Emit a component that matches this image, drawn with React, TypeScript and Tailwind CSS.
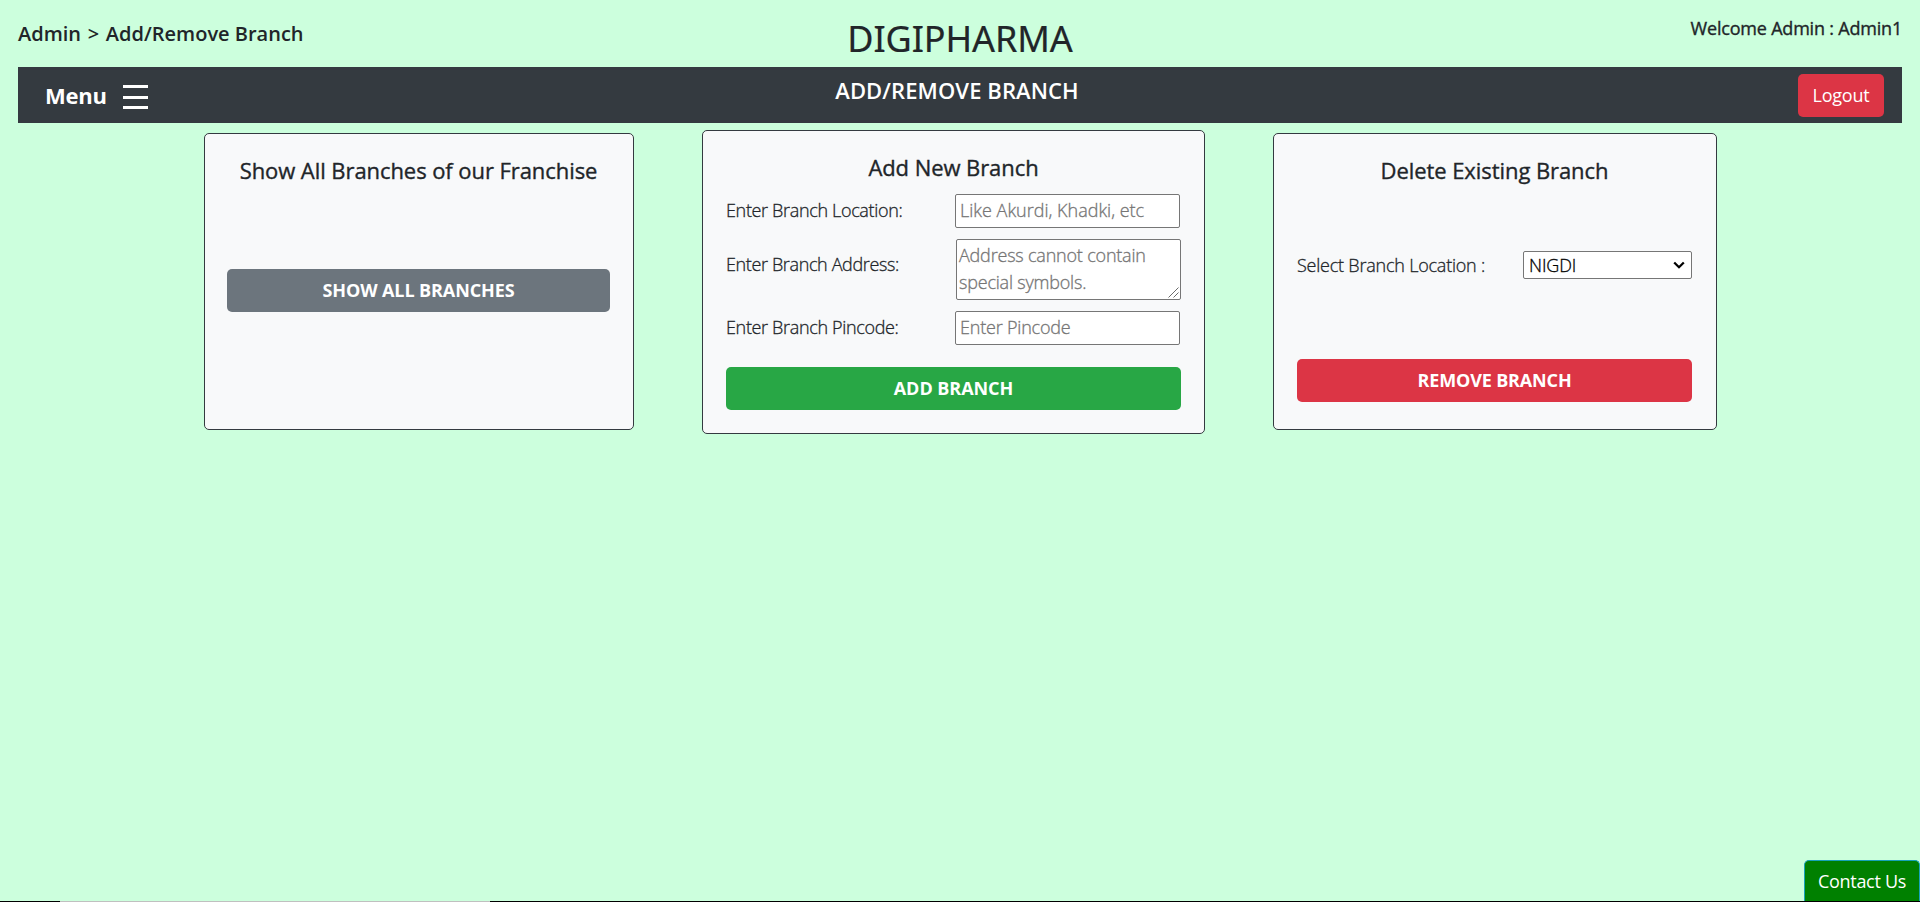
import type { ReactNode } from "react";

const medium = "[-webkit-text-stroke:0.35px_currentColor]";
const thin = "font-light [-webkit-text-stroke:0.3px_currentColor]";

function CardTitle({ children }: { children: ReactNode }) {
  return <h2 className={`text-center text-[22px] leading-[27px] tracking-[-0.07px] ${medium}`}>{children}</h2>;
}

function Row({ label, tracking, children }: { label: string; tracking: string; children: ReactNode }) {
  return (
    <div className="flex items-center justify-between">
      <label className={`text-lg leading-[27px] ${thin} ${tracking}`}>{label}</label>
      {children}
    </div>
  );
}

const field =
  "rounded-[2px] border border-[#767676] bg-white text-lg leading-[27px] font-light placeholder:text-[#757575] placeholder:opacity-100 [-webkit-text-stroke:0.3px_#757575]";
const button = "block h-[43px] w-full rounded-[5px] pb-px text-lg leading-[27px] font-bold text-white";

export default function App() {
  return (
    <div className="relative flex h-[902px] w-full flex-col overflow-hidden bg-[#ccffdd] font-['Open_Sans',sans-serif] text-[#212529]">
      <header className="grid h-[67px] shrink-0 grid-cols-3 items-start px-[18px]">
        <div className="pt-5 text-xl leading-7 font-semibold">
          Admin <span className="mx-[1.5px]">&gt;</span> Add/Remove Branch
        </div>
        <h1 className="pt-4 text-center font-['Noto_Sans',sans-serif] text-4xl leading-[45px] tracking-[-0.1px] [-webkit-text-stroke:0.2px_currentColor]">
          DIGIPHARMA
        </h1>
        <div className={`pt-4 text-right text-lg leading-6 tracking-[-0.2px] ${medium}`}>Welcome Admin : Admin1</div>
      </header>

      <nav className="mx-[18px] grid h-14 shrink-0 grid-cols-3 bg-[#343a40] text-white">
        <div className="flex items-center gap-4 pl-[27px]">
          <span className="text-[22px] leading-7 font-bold tracking-[-0.2px]">Menu</span>
          <span className="mt-1 flex w-[25px] flex-col gap-[7.5px]">
            <i className="h-[3px] bg-white" />
            <i className="h-[3px] bg-white" />
            <i className="h-[3px] bg-white" />
          </span>
        </div>
        <div className="pt-[10px] pr-[6px] text-center text-[22px] leading-[26px] font-semibold tracking-[0.1px]">
          ADD/REMOVE BRANCH
        </div>
        <div className="flex justify-end pt-[7px] pr-[18px]">
          <button className="h-[43px] w-[86px] rounded-[5px] bg-[#dc3545] text-lg leading-[27px] tracking-[-0.2px]">Logout</button>
        </div>
      </nav>

      <main className="flex items-start pt-[7px] pl-[204px]">
        <section className="mt-[3px] h-[297px] w-[430px] rounded-[5px] border border-[#343a40] bg-[#f8f9fa] pt-[23px] pr-[23px] pl-[22px]">
          <CardTitle>Show All Branches of our Franchise</CardTitle>
          <button className={`mt-[85px] bg-[#6c757d] tracking-[-0.1px] ${button}`}>SHOW ALL BRANCHES</button>
        </section>

        <section className="ml-[68px] h-[304px] w-[503px] rounded-[5px] border border-[#343a40] bg-[#f8f9fa] px-[23px] pt-[23px]">
          <CardTitle>Add New Branch</CardTitle>
          <div className="mt-[13px] mr-px">
            <Row label="Enter Branch Location:" tracking="pb-px tracking-[-0.34px]">
              <input className={`h-[34px] w-[225px] px-1 pb-0.5 ${field}`} placeholder="Like Akurdi, Khadki, etc" />
            </Row>
          </div>
          <div className="mt-[11px] flex items-start justify-between">
            <label className={`pt-3 text-lg leading-[27px] tracking-[-0.37px] ${thin}`}>Enter Branch Address:</label>
            <div className="relative">
              <textarea
                className={`block h-[61px] w-[225px] resize-none overflow-hidden px-[2px] pt-[2px] tracking-[-0.2px] ${field}`}
                placeholder="Address cannot contain special symbols."
              />
              <svg
                className="absolute right-[2px] bottom-[2px] size-[11px]"
                viewBox="0 0 11 11"
                stroke="#444444"
                strokeWidth="0.8"
              >
                <path d="M0.5 10.5 10.5 0.5M5.5 10.5 10.5 5.5" />
              </svg>
            </div>
          </div>
          <div className="mt-[11px] mr-px">
            <Row label="Enter Branch Pincode:" tracking="pb-px tracking-[-0.34px]">
              <input className={`h-[34px] w-[225px] px-1 pb-0.5 tracking-[-0.2px] ${field}`} placeholder="Enter Pincode" />
            </Row>
          </div>
          <button className={`mt-[22px] bg-[#28a745] tracking-[-0.05px] ${button}`}>ADD BRANCH</button>
        </section>

        <section className="mt-[3px] ml-[68px] h-[297px] w-[444px] rounded-[5px] border border-[#343a40] bg-[#f8f9fa] pt-[23px] pr-[24px] pl-[23px]">
          <CardTitle>Delete Existing Branch</CardTitle>
          <div className="mt-[67px]">
            <Row label="Select Branch Location :" tracking="tracking-[-0.22px]">
              <div className="flex h-[28px] w-[169px] items-center justify-between rounded-[2px] border border-[#767676] bg-white pr-[6px] pl-[5px] text-lg leading-[26px] text-black">
                <span className={`tracking-[-0.1px] ${thin}`}>NIGDI</span>
                <svg className="h-2 w-3" viewBox="0 0 12 8" fill="none" stroke="currentColor" strokeWidth="2.3">
                  <path d="M1.2 1.5 6 6.2 10.8 1.5" />
                </svg>
              </div>
            </Row>
          </div>
          <button className={`mt-[80px] bg-[#dc3545] tracking-[-0.15px] ${button}`}>REMOVE BRANCH</button>
        </section>
      </main>

      <button className="absolute right-0 bottom-0 h-[42px] w-[116px] rounded-t-[5px] border border-b-0 border-[#17a2b8] bg-[#008000] text-lg leading-[27px] tracking-[-0.3px] text-white">
        Contact Us
      </button>
      <div className="absolute bottom-0 left-0 flex h-px w-full bg-black">
        <div className="ml-[60px] w-[430px] bg-[#c0c0c0]" />
      </div>
    </div>
  );
}
